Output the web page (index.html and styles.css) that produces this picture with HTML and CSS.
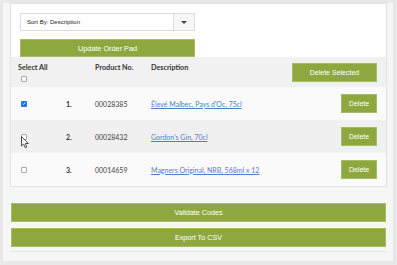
FILE: index.html
```html
<!DOCTYPE html>
<html lang="en">
<head>
  <meta charset="UTF-8">
  <title>Order Pad</title>
  <link rel="stylesheet" href="styles.css">
</head>
<body>
  <div class="panel">
    <div class="card">
      <div class="card-top">
        <div class="sort-select">
          <span class="sort-label">Sort By: Description</span>
          <span class="sort-arrow"><span class="caret"></span></span>
        </div>
        <button class="btn-green btn-update">Update Order Pad</button>
      </div>

      <div class="row row-head">
        <div class="cell-check">
          <span class="head-label">Select All</span>
          <span class="check"></span>
        </div>
        <div></div>
        <div class="head-label">Product No.</div>
        <div class="head-label">Description</div>
        <div class="cell-action"><button class="btn-green btn-del-sel">Delete Selected</button></div>
      </div>

      <div class="row row-light">
        <div class="cell-check">
          <span class="check checked">
            <svg width="5" height="5" viewBox="0 0 5 5"><path d="M0.8 2.6 L2 3.8 L4.3 1.2" fill="none" stroke="#fff" stroke-width="1"/></svg>
          </span>
        </div>
        <div class="num">1.</div>
        <div class="code">00028385</div>
        <div><a href="#" class="desc">Élevé Malbec, Pays d'Oc, 75cl</a></div>
        <div class="cell-action"><button class="btn-green btn-del">Delete</button></div>
      </div>

      <div class="row row-dark">
        <div class="cell-check">
          <span class="check"></span>
          <svg class="cursor" width="8" height="13" viewBox="0 0 8 13">
            <path d="M0.5 0.5 L0.5 10 L2.7 8 L4.3 11.8 L5.8 11.1 L4.3 7.5 L7.3 7.5 Z" fill="#fff" stroke="#222" stroke-width="0.8" stroke-linejoin="round"/>
          </svg>
        </div>
        <div class="num">2.</div>
        <div class="code">00028432</div>
        <div><a href="#" class="desc">Gordon's Gin, 70cl</a></div>
        <div class="cell-action"><button class="btn-green btn-del">Delete</button></div>
      </div>

      <div class="row row-light">
        <div class="cell-check"><span class="check"></span></div>
        <div class="num">3.</div>
        <div class="code">00014659</div>
        <div><a href="#" class="desc">Magners Original, NRB, 568ml x 12</a></div>
        <div class="cell-action"><button class="btn-green btn-del">Delete</button></div>
      </div>
    </div>

    <div class="actions">
      <button class="btn-green btn-wide">Validate Codes</button>
      <button class="btn-green btn-wide">Export To CSV</button>
    </div>
  </div>
</body>
</html>
```

FILE: styles.css
```css
* {
  margin: 0;
  padding: 0;
  box-sizing: border-box;
}

body {
  background: #e8e8e8;
  font-family: 'Lato', sans-serif;
  color: #333;
  padding: 3px 4px 4px 3px;
  height: 265px;
  overflow: hidden;
}

.panel {
  background: #f6f6f6;
  height: 258px;
  padding: 1px 7px 0 8px;
}

/* Card */
.card {
  background: #fafafa;
  box-shadow: 0 0 1px 1px rgba(0, 0, 0, 0.07);
}

.card-top {
  background: #fff;
  padding: 9px 0 0 9px;
  display: flex;
  flex-direction: column;
  gap: 8px;
}

.sort-select {
  width: 175px;
  height: 18px;
  border: 1px solid #dcdcdc;
  background: #fff;
  display: flex;
  align-items: center;
}

.sort-label {
  flex: 1;
  font-family: 'Liberation Sans', Arial, sans-serif;
  font-size: 6px;
  color: #222;
  padding-left: 6px;
}

.sort-arrow {
  width: 21px;
  height: 100%;
  border-left: 1px solid #dcdcdc;
  background: #f7f7f7;
  display: flex;
  align-items: center;
  justify-content: center;
}

.caret {
  border-left: 3px solid transparent;
  border-right: 3px solid transparent;
  border-top: 3px solid #444;
}

.btn-green {
  background: #8ea83f;
  border: 1px solid #a7bc67;
  color: #fff;
  font-family: 'Liberation Sans', Arial, sans-serif;
  font-size: 7px;
  cursor: pointer;
}

.btn-update {
  width: 175px;
  height: 18px;
  font-size: 7.3px;
}

/* Table rows */
.row {
  display: grid;
  grid-template-columns: 48px 29px 56px 1fr auto;
  align-items: center;
  padding: 0 9px 0 7px;
  height: 33px;
  font-size: 7px;
}

.row-head {
  background: #f1f1f1;
  height: 30px;
  align-items: start;
  padding-top: 6px;
}

.row-light {
  background: #fafafa;
}

.row-dark {
  background: #f0f0f0;
}

.head-label {
  font-weight: bold;
  font-size: 7.2px;
  color: #333;
  line-height: 9px;
}

.cell-check {
  display: flex;
  flex-direction: column;
  gap: 4px;
  position: relative;
}

.check {
  width: 6px;
  height: 6px;
  margin-left: 2.5px;
  border: 1px solid #a8a8a8;
  border-radius: 1px;
  background: #fff;
  display: flex;
  align-items: center;
  justify-content: center;
}

.check.checked {
  background: #1a73e8;
  border-color: #1a73e8;
}

.cursor {
  position: absolute;
  left: 3px;
  top: 2px;
}

.num {
  font-weight: bold;
  color: #333;
}

.code {
  color: #444;
}

.desc {
  color: #4b82c7;
  text-decoration: underline;
}

.cell-action {
  display: flex;
  justify-content: flex-end;
}

.btn-del-sel {
  width: 85px;
  height: 19px;
}

.btn-del {
  width: 36px;
  height: 19px;
}

/* Bottom actions */
.actions {
  margin-top: 17px;
  display: flex;
  flex-direction: column;
  gap: 6px;
  padding-bottom: 4px;
  border-bottom: 1px solid #e2e5d6;
}

.btn-wide {
  width: 100%;
  height: 19px;
  font-size: 7.2px;
}
```
